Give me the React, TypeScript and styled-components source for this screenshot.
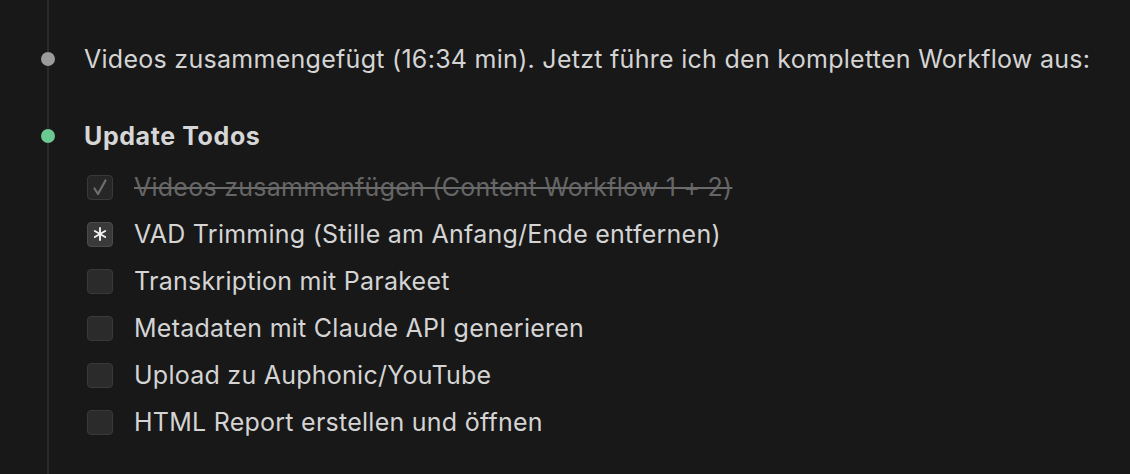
import React from "react";
import styled, { createGlobalStyle } from "styled-components";

const Global = createGlobalStyle`
  html, body { margin: 0; padding: 0; background: #181818; }
  body { font-family: Inter, "Noto Sans", sans-serif; -webkit-font-smoothing: antialiased; }
`;

const Page = styled.div`
  width: 1130px;
  height: 474px;
  background: #181818;
  padding-left: 47px;
  box-sizing: border-box;
  overflow: hidden;
`;

const Rail = styled.div`
  border-left: 2px solid #2b2b2b;
  height: 100%;
  padding-top: 40px;
  box-sizing: border-box;
  display: flex;
  flex-direction: column;
`;

const Entry = styled.div<{ $gap?: number }>`
  display: flex;
  align-items: center;
  margin-left: -8px;
  margin-bottom: ${(p) => p.$gap ?? 0}px;
  height: 38px;
`;

const Dot = styled.span<{ $color: string }>`
  width: 14px;
  height: 14px;
  border-radius: 50%;
  background: ${(p) => p.$color};
  flex: none;
`;

const Message = styled.span<{ $bold?: boolean }>`
  margin-left: 29px;
  font-size: 25px;
  color: ${(p) => (p.$bold ? "#d6d6d6" : "#d4d4d4")};
  font-weight: ${(p) => (p.$bold ? 700 : 400)};
  letter-spacing: ${(p) => (p.$bold ? "0.6px" : "0.28px")};
  white-space: nowrap;
`;

const TodoList = styled.ul`
  list-style: none;
  margin: 0;
  padding: 1px 0 0 38px;
  display: flex;
  flex-direction: column;
  gap: 21px;
`;

const Todo = styled.li<{ $done?: boolean }>`
  display: flex;
  align-items: center;
  height: 26px;
  gap: 21px;
  font-size: 25px;
  letter-spacing: 0.25px;
  white-space: nowrap;
  color: ${(p) => (p.$done ? "#656565" : "#d4d4d4")};
  text-decoration: ${(p) => (p.$done ? "line-through" : "none")};
  text-decoration-color: #6a6a6a;
  text-decoration-thickness: 2px;
`;

const Box = styled.span<{ $state: "done" | "active" | "open" }>`
  width: 26px;
  height: 25px;
  border-radius: 4px;
  box-sizing: border-box;
  border: 1.5px solid ${(p) => (p.$state === "active" ? "#4a4a4a" : "#393939")};
  background: ${(p) => (p.$state === "active" ? "#3a3a3a" : p.$state === "done" ? "#262626" : "#2b2b2b")};
  display: flex;
  align-items: center;
  justify-content: center;
  flex: none;
`;

const todos: { text: string; state: "done" | "active" | "open" }[] = [
  { text: "Videos zusammenfügen (Content Workflow 1 + 2)", state: "done" },
  { text: "VAD Trimming (Stille am Anfang/Ende entfernen)", state: "active" },
  { text: "Transkription mit Parakeet", state: "open" },
  { text: "Metadaten mit Claude API generieren", state: "open" },
  { text: "Upload zu Auphonic/YouTube", state: "open" },
  { text: "HTML Report erstellen und öffnen", state: "open" },
];

function Mark({ state }: { state: "done" | "active" | "open" }) {
  if (state === "done")
    return (
      <svg width="16" height="17" viewBox="0 0 16 17">
        <path d="M2.5 9.5 L6 15 L13.5 1.5" fill="none" stroke="#6e6e6e" strokeWidth="2.2" strokeLinecap="round" strokeLinejoin="round" />
      </svg>
    );
  if (state === "active")
    return (
      <svg width="14" height="14" viewBox="0 0 14 14">
        <g stroke="#f2f2f2" strokeWidth="1.9" strokeLinecap="round">
          <line x1="7" y1="1" x2="7" y2="13" />
          <line x1="1.8" y1="4" x2="12.2" y2="10" />
          <line x1="1.8" y1="10" x2="12.2" y2="4" />
        </g>
      </svg>
    );
  return null;
}

export default function App() {
  return (
    <>
      <Global />
      <Page>
        <Rail>
          <Entry $gap={39}>
            <Dot $color="#9b9b9b" />
            <Message>Videos zusammengefügt (16:34 min). Jetzt führe ich den kompletten Workflow aus:</Message>
          </Entry>
          <Entry $gap={18}>
            <Dot $color="#6cc98f" />
            <Message $bold>Update Todos</Message>
          </Entry>
          <TodoList>
            {todos.map((t) => (
              <Todo key={t.text} $done={t.state === "done"}>
                <Box $state={t.state}>
                  <Mark state={t.state} />
                </Box>
                <span>{t.text}</span>
              </Todo>
            ))}
          </TodoList>
        </Rail>
      </Page>
    </>
  );
}
